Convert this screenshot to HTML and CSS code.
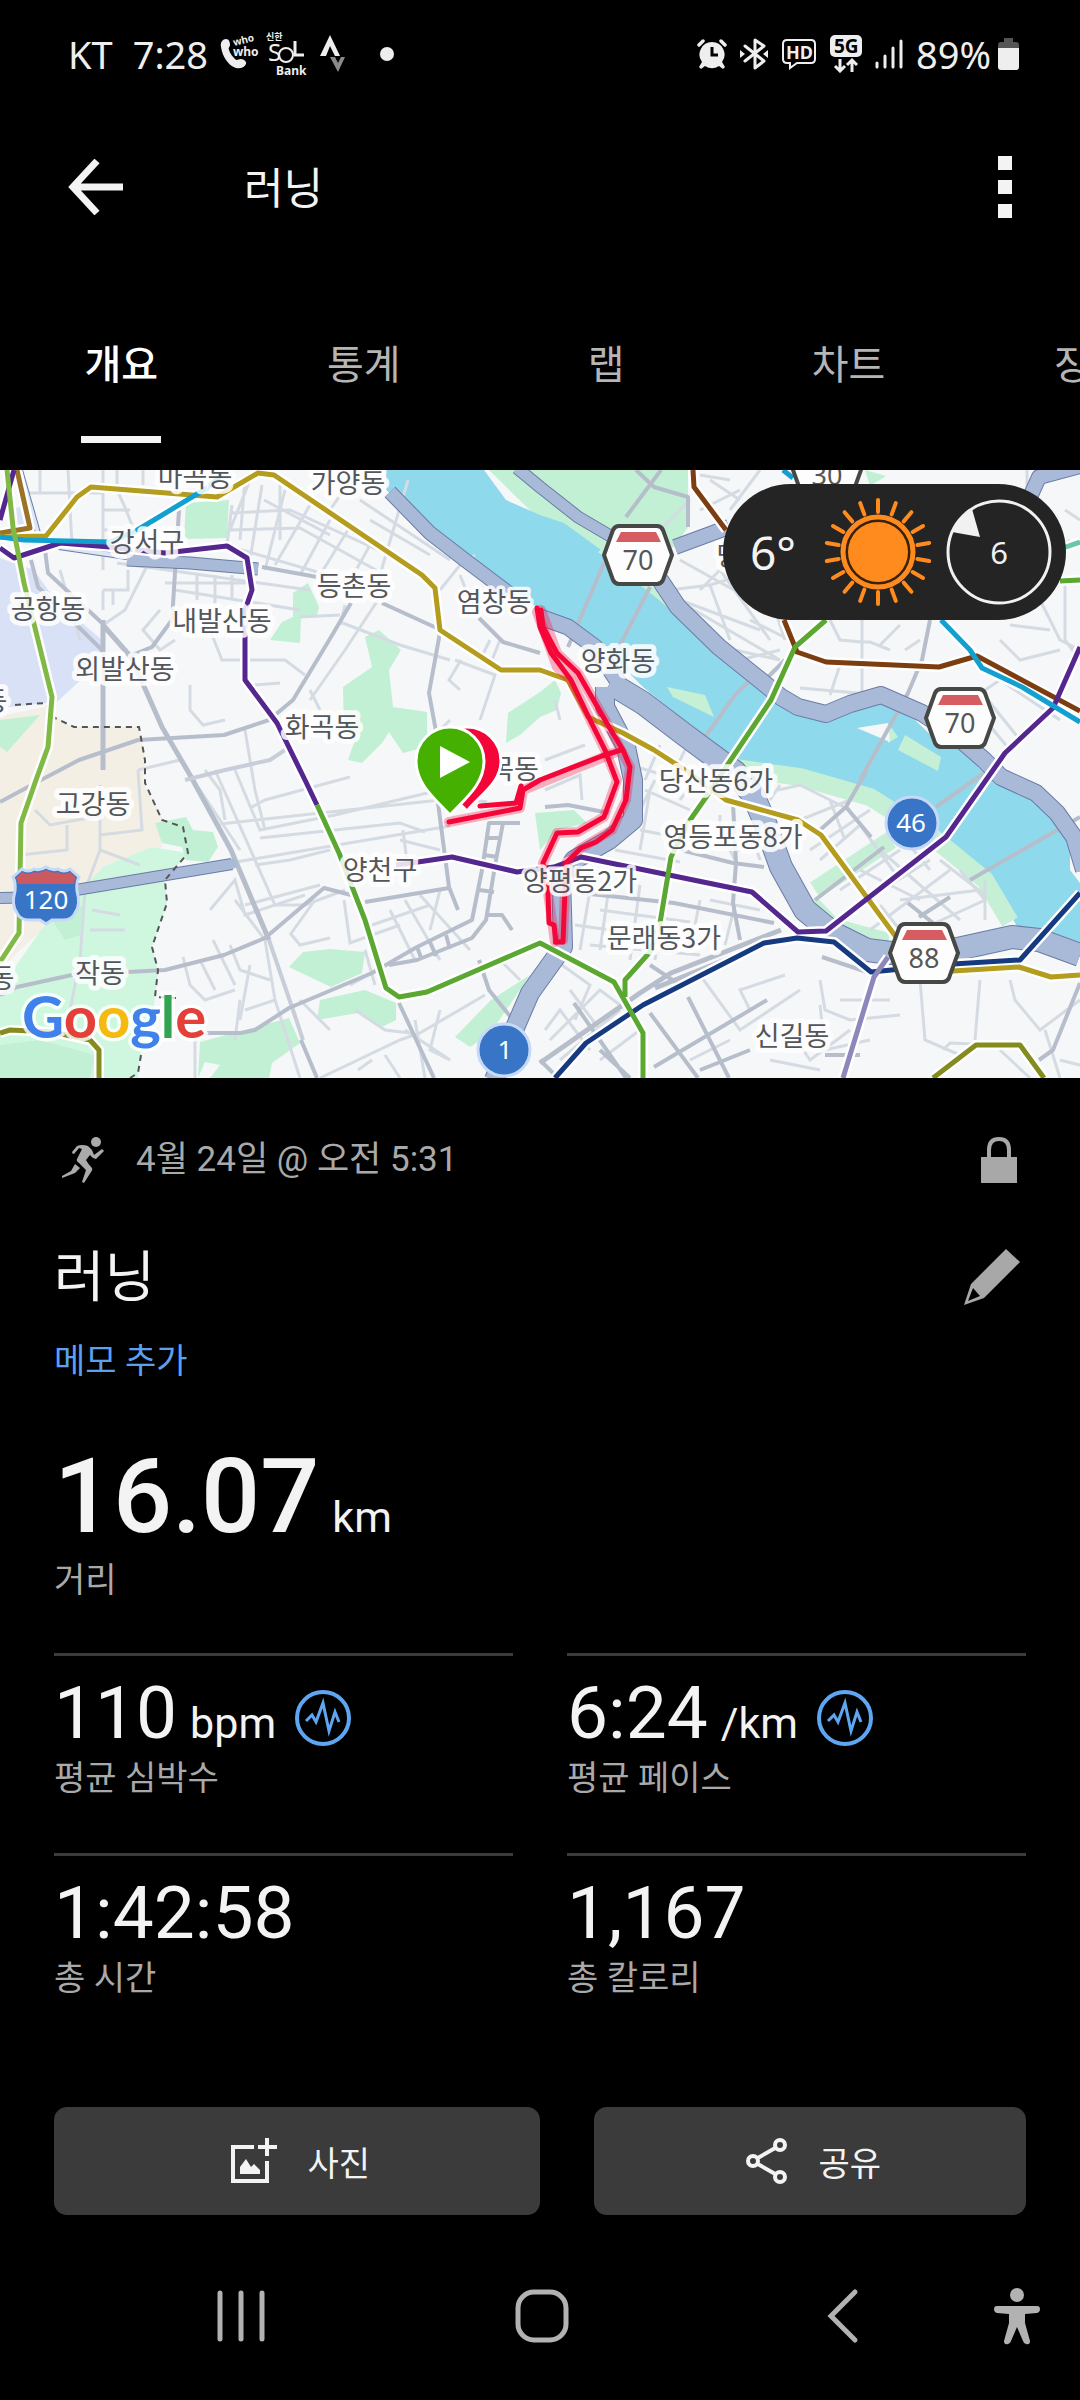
FILE: index.html
```html
<!DOCTYPE html>
<html lang="ko">
<head>
    <meta charset="UTF-8">
    <meta name="viewport" content="width=device-width, initial-scale=1.0">
    <title>러닝</title>
    <link rel="stylesheet" href="styles.css">
</head>
<body>
<div class="status-bar">
    <div class="status-left">
        <span class="carrier">KT</span>
        <span class="time">7:28</span>
        <svg class="whowho" width="40" height="36" viewBox="0 0 40 36">
            <path fill="#eee" d="M1 11C0 6 3 3 6 3c3 0 4 3 4 6 0 2-2 2-1 5 1 4 4 7 6 9 2 2 3 0 6 0 3 0 6 3 5 5-2 4-6 5-10 4C8 30 2 19 1 11z"/>
            <text class="who" x="14" y="10" transform="rotate(-14 14 10)">who</text>
            <text class="who who-big" x="13" y="20">who</text>
        </svg>
        <svg class="sol" width="42" height="46" viewBox="0 0 42 46">
            <text class="sol-ko" x="0" y="9">신한</text>
            <text class="sol-name" x="2" y="30">S</text>
            <circle cx="20" cy="24" r="7" fill="none" stroke="#eee" stroke-width="2"/>
            <path d="M29 10v14h9" fill="none" stroke="#eee" stroke-width="3"/>
            <text class="sol-bank" x="10" y="44">Bank</text>
        </svg>
        <svg class="strava" width="26" height="38" viewBox="0 0 26 38">
            <path fill="#eee" d="M10 0 20 21h-5l-5-10-4 10H0z"/>
            <path fill="#8a8a8a" d="M10 22h5l3 6 3-6h4l-7 15z"/>
        </svg>
        <span class="dot"></span>
    </div>
    <div class="status-right">
        <svg width="30" height="30" viewBox="0 0 30 30">
            <path fill="#eee" d="M15 3a12.5 12.5 0 0 1 10 20l3 5-2 2-4-3a13 13 0 0 1-14 0l-4 3-2-2 3-5A12.5 12.5 0 0 1 15 3z"/>
            <path stroke="#eee" stroke-width="3.5" stroke-linecap="round" d="m2 6 4-4M28 6l-4-4"/>
            <path stroke="#000" stroke-width="3" fill="none" d="M15 8v8h6"/>
        </svg>
        <svg width="28" height="32" viewBox="0 0 28 32">
            <path fill="none" stroke="#eee" stroke-width="3" stroke-linejoin="round" stroke-linecap="round" d="m5 8 19 15-9 7V2l9 6L5 23"/>
            <path fill="#eee" d="m0 12 5 4-5 4zM28 12l-5 4 5 4z"/>
        </svg>
        <svg width="36" height="32" viewBox="0 0 36 32">
            <path fill="none" stroke="#eee" stroke-width="2" d="M6 2h24q4 0 4 4v15q0 4-4 4H16l-7 5v-5H6q-4 0-4-4V6q0-4 4-4z"/>
            <text class="hd" x="5" y="21">HD</text>
        </svg>
        <svg width="32" height="38" viewBox="0 0 32 38">
            <rect x="0" y="0" width="32" height="22" rx="5" fill="#eee"/>
            <text class="five-g" x="4" y="18">5G</text>
            <path fill="none" stroke="#eee" stroke-width="3" d="M10 24v12m-5-5 5 5 5-5M22 37V25m-5 5 5-5 5 5"/>
        </svg>
        <svg width="28" height="32" viewBox="0 0 28 32">
            <path stroke="#eee" stroke-width="3" stroke-linecap="round" d="M2 25v4M10 18v11M18 10v19M26 3v26"/>
        </svg>
        <span class="percent">89%</span>
        <svg class="battery" width="22" height="32" viewBox="0 0 22 32">
            <path fill="#555" d="M6 0h9v4h3q3 0 3 3v4H0V7q0-3 3-3h3z"/>
            <path fill="#eee" d="M0 10h21v19q0 3-3 3H3q-3 0-3-3z"/>
        </svg>
    </div>
</div>

<header class="toolbar">
    <button class="icon-btn" aria-label="뒤로">
        <svg width="56" height="56" viewBox="0 0 56 56">
            <path fill="none" stroke="#f3f3f3" stroke-width="7" d="M29 2 5 28l24 26M5 28h50"/>
        </svg>
    </button>
    <h1>러닝</h1>
    <button class="icon-btn menu-btn" aria-label="메뉴">
        <svg width="14" height="62" viewBox="0 0 14 62">
            <path fill="#f3f3f3" d="M0 0h14v14H0zM0 24h14v14H0zM0 48h14v14H0z"/>
        </svg>
    </button>
</header>

<nav class="tabs">
    <div class="tab"><a class="active" href="#">개요</a></div>
    <div class="tab"><a href="#">통계</a></div>
    <div class="tab"><a href="#">랩</a></div>
    <div class="tab"><a href="#">차트</a></div>
    <div class="tab"><a href="#">장비</a></div>
</nav>

<section class="map">
    <svg class="map-canvas" viewBox="0 470 1080 608">
        <rect x="0" y="470" width="1080" height="608" fill="#f6f7f8"/>

        <!-- airport, city and park areas -->
        <path fill="#d9e1f6" d="M0 558 34 570 55 600 102 640V660L57 702 0 708zM12 510 24 505 28 530 14 530z"/>
        <path fill="#f4efe4" d="M0 716 45 707 55 715 72 727H139L145 760 143 783 155 803 164 822 162 847 138 857 83 885 45 927 20 950 0 970z"/>
        <path fill="#cff7df" d="M0 970 15 967 41 930 69 903 103 867 151 847 188 853 165 880 167 903 152 947 158 970 155 997 150 1030 140 1055 138 1078H0z"/>
        <g fill="#c1f0d4">
            <path d="M0 720 40 715 7 752 0 747z"/>
            <path d="M155 823 186 817 193 830 213 832 218 847 208 862 186 860 182 847 162 843z"/>
            <path d="M52 920 83 905 80 935 65 940z"/>
            <path d="M0 1045 40 1040 95 1055 90 1078H0z"/>
            <path d="M186 503 229 500 227 538 184 539z"/>
            <path d="M308 583 319 607 317 615 301 618 300 643 270 640 282 622 293 617V593z"/>
            <path d="M365 637 379 630 401 650 389 670 393 707 427 712V747L403 753 389 732 382 743 362 763 348 760 355 740 344 730 343 687 372 667z"/>
            <path d="M506 743 508 713 540 692 555 680 561 693 557 710 540 717 520 735z"/>
            <path d="M289 967 303 952 330 949 365 952 362 973 331 987z"/>
            <path d="M320 1000 365 990 396 1003V1020L382 1027 358 1013 317 1020z"/>
            <path d="M200 1042 289 1018 300 1043 272 1063 269 1078H210L220 1065 205 1062 198 1078z"/>
            <path d="M455 1037 491 1000 530 975 489 1035 470 1047z"/>
            <path d="M535 813 574 810 587 823 557 830 540 850z"/>
            <path d="M489 470H688V527L674 547 600 560 540 520z"/>
            <path d="M865 470 886 476 870 486z"/>
        </g>

        <!-- river -->
        <path fill="#8fd9ed" d="M386 470H484L506 500 540 515 564 523 597 547 612 557 660 593 712 637 760 687 781 703 826 717 850 713 881 703 915 720 936 740 960 743 984 767 1001 777 1022 795 1050 810 1070 843V870L1080 883V957L1046 937 1019 930 998 893 970 870 936 833 884 803 860 790 826 777 778 770 740 760 705 737 643 687 609 653 592 640 561 623 540 610 510 587 386 490z"/>
        <path fill="none" stroke="#c5f0d5" stroke-width="6" d="M600 550 660 597 712 641 750 680M625 685 685 738 735 772"/>
        <path fill="none" stroke="#c5f0d5" stroke-width="18" d="M735 768 800 777 870 797 930 835 985 880 1010 922M815 890 891 840M810 903 833 927 888 942"/>
        <path fill="#c5f0d5" d="M667 687 705 695 714 717 673 697zM888 723 898 737 888 743zM905 735 941 757 938 771 898 750z"/>
        <path fill="#f6f7f8" d="M857 728 888 723 890 742z"/>

        <!-- minor streets -->
        <g fill="none" stroke="#d5dbe3" stroke-width="3">
            <path d="M28 493H103M40 470V493M68 470 72 545M103 470V570M103 510H130M117 470V490L124 505 134 530M143 470V485M103 530H124"/>
            <path d="M232 505 227 545M245 480 240 540M262 485 250 560M285 490 265 570M310 505 275 565M330 520 300 575M348 530 320 575M370 545 345 590M230 513 290 510 400 560M230 530 300 528 385 575M225 545 345 580M352 478 330 510M360 500 450 560M370 520 430 555M408 480 380 575M250 480 230 530M280 480V540M264 500 330 535"/>
            <path d="M117 563 310 590M175 590 300 610M197 575V600M215 575V605M232 575V600M165 583H250M103 590H128V570M103 590V610M113 590V605M150 560 125 610 103 625"/>
            <path d="M160 610 143 630 160 650 175 640M210 630 222 660H285L305 675M300 617 340 615M340 622 400 645M345 605 340 625M378 600 345 650 310 700M400 645 450 660M440 590 460 565 475 555M460 575 470 600M455 660 495 675 480 720M461 660 449 680 460 690M190 685V710L203 725 225 720M255 685 280 683M310 690 320 710M245 730 255 790 265 830M60 570 80 640M440 730 450 720M490 640 480 660M500 640 490 665"/>
            <path d="M35 810 50 825 105 815M67 825V850L20 855M100 785V850L85 890 80 960 70 1010M100 850 140 865M138 770 142 830 100 835M138 770 180 760M92 910 120 915M90 930H125"/>
            <path d="M190 775 240 850M215 770 275 905H305L345 890M235 770 260 830 335 815 440 790M220 824 440 800M260 838 400 823 425 832M230 863 450 826M255 865 290 860 330 850M205 770 220 790 225 820M250 808 265 800 350 777M450 797 487 802"/>
            <path d="M245 905 320 885M210 910 235 880 245 915 305 895M235 900 265 940 275 1000 300 1078M290 935 315 900M183 957 190 985 205 1000 235 990M200 960 215 990M213 940 235 985M230 945 240 970 270 980M290 933 300 945 330 938M240 1000 235 1040M245 1010 275 1000M250 965 240 1020"/>
            <path d="M344 900 350 943 400 925M372 925 430 905M390 910 415 960M405 900 440 960M420 895 470 950M440 890 430 930M365 950 375 985M350 985 372 973M320 1078 400 1040 420 1033 485 995M385 1055 400 1078M405 1030 450 1060 430 1050 440 1010M415 1020 425 1078M500 960 520 980M440 850 400 840M403 830 408 870M355 1010 385 1030 410 1033"/>
            <path d="M195 1035V1078M300 1000 330 1030M358 1070 372 1060"/>
            <path d="M550 1040 600 990 640 1020M560 1060 620 1010M570 990 600 1030M555 960 590 985 575 1020M545 1030 560 1010 590 1050M600 1060 640 1030"/>
            <path d="M590 890 580 950M610 880 600 950M640 885 630 960M665 895 655 960M700 900 690 950M575 925 680 940M590 945 700 955M600 910 690 922M735 905 725 945M710 900 760 910M655 780 630 830M645 790 690 810M640 830 740 850M615 850 680 862M650 790 640 850M720 815V830L735 860M750 830 760 860"/>
            <path d="M778 790 800 785 850 810M780 785 770 800M800 820 850 800M810 850 870 810M820 860 860 825 900 880M840 890 900 850M850 910 930 860M870 930 950 870M880 850 960 920M900 900 980 890M920 930 985 900 960 870M985 880V920M940 860 985 895M830 800 845 840M860 870 920 900M880 905 900 930M905 840 930 870"/>
            <path d="M700 975 740 1030 800 990M750 1010 740 990 785 975M820 980 825 1010 850 1020 900 1015M920 980 925 1040 960 1055M980 980 975 1040M1010 980 1015 1000 1040 1030 1080 1000M943 1050 950 1043 1000 1045M820 1005 825 1050 870 1040M770 1060 820 1070M690 1060 730 1040M790 1030 810 1060 850 1030M1000 1050 1030 1078M1060 1060 1080 1065M840 1000 890 1000M1045 1030 1060 1078"/>
            <path d="M830 620 840 640 862 642M862 620V700M862 642H870L890 650M900 625 880 645M905 650 920 640M1040 600 1060 640 1080 650M1065 580V640L1080 660M1010 625 1050 630M980 690 1020 740M1000 680 1060 720M960 690 1010 750M800 688 880 695M840 665 830 695M970 700 1000 680M1000 640 1020 660 1060 650M1045 560 1070 540"/>
            <path d="M670 590 710 585 760 570M680 600 760 630M700 590 730 560M710 585 730 640M680 560 770 610M750 620 790 640M735 650 780 660M740 660 780 650M660 590 780 660M720 570 770 640M775 610 785 640"/>
            <path d="M1065 510 1080 520M1027 470V500M710 480 740 500M730 510 760 470M770 490 790 510M700 510 740 490M650 540 690 500M730 480 700 475"/>
            <path d="M545 760 585 745M560 720 555 700M545 790 580 775 582 800M640 740 625 760M660 745 645 780M685 750 665 790M700 770 680 800M625 740 670 760M630 765 680 780"/>
        </g>

        <!-- main roads -->
        <g fill="none" stroke="#b7becb" stroke-width="4" stroke-linejoin="round">
            <path stroke-width="5" d="M103 620V770M103 625 131 657 162 727 190 775 231 850 269 940"/>
            <path stroke="#c8ced9" d="M269 940 293 1010 303 1040"/>
            <path d="M301 1040 317 1078M45 550 48 573 102 623M31 560 38 587 102 650M179 510 172 620 152 647 127 657"/>
            <path d="M262 567 317 577M382 603 441 630M351 603 331 637 293 700 269 720 224 735 138 740 79 760 41 780 0 802"/>
            <path d="M441 627 429 693 437 737M438 803 449 887 458 910M479 618 503 642 540 653"/>
            <path d="M0 995 17 987 72 975 165 970 224 955 265 938 324 888 351 895M365 902 449 888"/>
            <path d="M205 1033 241 1033 255 1030 289 1008 372 973 417 947 472 920 482 870 489 823H520"/>
            <path d="M389 965 417 960 472 938 486 920 496 860 503 823M479 890 494 892M484 855 498 857M487 838H502M417 947 422 960M430 942 436 956M446 935 450 949"/>
            <path d="M479 960 489 990 513 1020M399 1003 434 1078M488 915 502 915 512 930"/>
            <path d="M545 807 568 805 609 813M581 893 674 903 774 923M733 803 736 863 733 903 740 940M681 850 733 863 764 867"/>
            <path stroke-width="5" d="M781 930 671 973 640 993 540 1063M775 940 655 988"/>
            <path d="M574 1003 626 1078M654 1067 767 1000M688 997 729 1078M650 1013 698 1078M700 1070 750 1050M540 1060 570 1090M650 965 680 985M600 1050 630 1078"/>
            <path d="M822 957 867 972M1080 983 1053 1050 1039 1060M867 770 846 807 871 837M846 807 820 830M815 900 884 847M908 903 933 923M919 917 950 897M825 1055H860"/>
            <path d="M661 470 626 517M604 563 568 647M650 587 619 647M930 620 922 660 908 693 860 780M1080 817 970 880M984 773 936 807M636 470 654 487 688 497V527"/>
            <path d="M750 680 735 695 705 737M765 680 785 660"/>
            <path stroke="#c8ced9" d="M185 780 225 770 270 760 285 750"/>
        </g>

        <!-- expressways: dark edge first, fill over it -->
        <g fill="none" stroke-linejoin="round">
            <g stroke="#6a7ca6">
                <path stroke-width="15" d="M390 492 430 533 465 560 510 594"/>
                <path stroke-width="17" d="M540 617 568 627 595 647 619 683"/>
                <path stroke-width="24" d="M610 683 643 703 685 735 735 772 753 795 764 820 781 867 805 910 833 933 867 950 891 953 953 950 1012 937 1039 940 1080 955"/>
                <path stroke-width="13" d="M517 468 540 487 578 517 612 537 660 580 678 607"/>
                <path stroke-width="18" d="M660 580 678 607 719 647 760 680 781 697 798 707 826 714 850 704 881 695 922 713 953 733 984 760 1001 777 1036 793 1057 813 1074 837 1084 870"/>
                <path stroke-width="16" d="M675 547 729 527M1030 497 1039 477 1080 466"/>
                <path stroke-width="20" d="M605 687V707L626 747 633 780V820L609 840 574 860 561 880 562 910 563 947 530 993 514 1030 494 1080"/>
                <path stroke-width="12" d="M0 898 46 897M70 891 232 864"/>
                <path stroke-width="6" d="M59 547 127 557M20 470 38 533"/>
                <path stroke-width="13" d="M127 560 190 563 258 569"/>
            </g>
            <g stroke="#a9b9d8">
                <path stroke-width="13" d="M390 492 430 533 465 560 510 594"/>
                <path stroke-width="15" d="M540 617 568 627 595 647 619 683"/>
                <path stroke-width="22" d="M610 683 643 703 685 735 735 772 753 795 764 820 781 867 805 910 833 933 867 950 891 953 953 950 1012 937 1039 940 1080 955"/>
                <path stroke-width="11" d="M517 468 540 487 578 517 612 537 660 580 678 607"/>
                <path stroke-width="16" d="M660 580 678 607 719 647 760 680 781 697 798 707 826 714 850 704 881 695 922 713 953 733 984 760 1001 777 1036 793 1057 813 1074 837 1084 870"/>
                <path stroke-width="14" d="M675 547 729 527M1030 497 1039 477 1080 466"/>
                <path stroke-width="18" d="M605 687V707L626 747 633 780V820L609 840 574 860 561 880 562 910 563 947 530 993 514 1030 494 1080"/>
                <path stroke-width="10" stroke-linecap="round" d="M0 898 46 897M70 891 232 864"/>
                <path stroke-width="4" stroke="#dde6f7" d="M59 547 127 557M20 470 38 533"/>
                <path stroke-width="11" d="M127 560 190 563 258 569"/>
            </g>
        </g>
        <path fill="none" stroke="#555" stroke-width="2" stroke-dasharray="6 5" d="M15 705 45 703 55 718 74 727H139L145 760V783L162 820 183 827 188 853 165 880 167 903 152 947 158 970 155 997 177 998M141 1055 138 1073 130 1078"/>

        <!-- subway lines -->
        <g class="subway">
            <g stroke="#fff" stroke-width="10">
                <path d="M0 537 46 536 77 497 91 487 217 497 258 473 274 475 422 575 435 588 440 630 501 670H540L568 680 588 717 623 733 654 750 685 770 726 800 798 820 821 835 896 937 930 970 953 971 1019 967 1051 977 1080 975"/>
                <path d="M14 470 0 520M0 548 14 558 60 543 110 547 165 553 227 546 247 558 252 590 245 610V680L277 723 305 780 317 805 339 853 365 920 386 988 399 997 427 992 540 943 614 982 643 1033V1078"/>
                <path d="M396 865 418 862 452 857 517 872 554 867 581 857 752 892 798 932 826 931 946 837 1005 753 1053 708 1080 647"/>
                <path d="M826 620 795 647 771 700 726 767 709 793 688 823 671 857 660 923 650 952 625 980V997M1060 581 1080 580M1060 549 1080 542"/>
                <path d="M7 470 13 527 24 583 52 697 48 747 36 780 21 823 19 933 0 962M17 470 30 528 0 533"/>
                <path d="M693 470 694 487 726 530M784 620 797 652 826 662 939 667 977 656 1080 711M941 620 970 650 982 668 1022 687 1080 722"/>
                <path d="M555 1078 586 1043 643 1005 764 943 797 938 834 942 871 972 953 964 1020 960 1080 893M888 957 874 977 843 1078"/>
                <path d="M933 1078 976 1045H1020L1044 1078M0 1033 10 1030 52 1032 90 1040 99 1050V1078M134 532 207 488"/>
            </g>
            <g stroke-width="5">
                <path stroke="#7c3d10" d="M693 470 694 487 726 530M784 620 797 652 826 662 939 667 977 656 1080 711"/>
                <path stroke="#9c7326" d="M17 470 30 528 0 533"/>
                <path stroke="#b39c1e" d="M0 537 46 536 77 497 91 487 217 497 258 473 274 475 422 575 435 588 440 630 501 670H540L568 680 588 717 623 733 654 750 685 770 726 800 798 820 821 835 896 937 930 970 953 971 1019 967 1051 977 1080 975"/>
                <path stroke="#54278f" d="M14 470 0 520M0 548 14 558 60 543 110 547 165 553 227 546 247 558 252 590 245 610V680L277 723 305 780 317 805"/>
                <path stroke="#54278f" d="M396 865 418 862 452 857 517 872 554 867 581 857 752 892 798 932 826 931 946 837 1005 753 1053 708 1080 647"/>
                <path stroke="#12a0d0" d="M0 537 24 540 110 542 134 532 207 488 222 475M941 620 970 650 982 668 1022 687 1080 722M783 470 793 478"/>
                <path stroke="#80ba45" d="M7 470 13 527 24 583 52 697 48 747 36 780 21 823 19 933 0 962"/>
                <path stroke="#163a80" d="M555 1078 586 1043 643 1005 764 943 797 938 834 942 871 972 953 964 1020 960 1080 893"/>
                <path stroke="#5aa832" d="M317 805 339 853 365 920 386 988 399 997 427 992 540 943 614 982 643 1033V1078M826 620 795 647 771 700 726 767 709 793 688 823 671 857 660 923 650 952 625 980V997M1060 581 1080 580"/>
                <path stroke="#6cc6a5" d="M1060 549 1080 542"/>
                <path stroke="#8d88bb" d="M888 957 874 977 843 1078"/>
                <path stroke="#848c20" d="M933 1078 976 1045H1020L1044 1078M0 1033 10 1030 52 1032 90 1040 99 1050V1078"/>
            </g>
        </g>

        <g class="place">
            <text x="195" y="487">마곡동</text>
            <text x="348" y="493">가양동</text>
            <text x="147" y="552">강서구</text>
            <text x="48" y="619">공항동</text>
            <text x="354" y="596">등촌동</text>
            <text x="222" y="631">내발산동</text>
            <text x="125" y="679">외발산동</text>
            <text x="322" y="737">화곡동</text>
            <text x="-5" y="711">동</text>
            <text x="514" y="779">목동</text>
            <text x="93" y="814">고강동</text>
            <text x="100" y="983">작동</text>
            <text x="2" y="988">동</text>
            <text x="380" y="880">양천구</text>
            <text x="664" y="948">문래동3가</text>
            <text x="716" y="791">당산동6가</text>
            <text x="733" y="847">영등포동8가</text>
            <text x="792" y="1046">신길동</text>
            <text x="618" y="671">양화동</text>
            <text x="729" y="566">망</text>
        </g>

        <!-- recorded route -->
        <g fill="none" stroke-linejoin="round" stroke-linecap="round">
            <g stroke="#f50638" stroke-opacity=".3" stroke-width="10">
                <path d="M537 612 557 667 571 680 605 750 617 780 604 817 578 832 557 833 543 863 548 893 555 942"/>
                <path d="M541 610 557 653 578 673 609 727 630 767 626 800 612 830 581 848 566 863 563 940M621 750 523 790 520 808 449 822"/>
            </g>
            <g stroke="#f50638" stroke-width="5">
                <path d="M537 608 540 627 551 653 571 680 590 720 605 750 617 782 604 817 578 832 557 833 543 863 548 893 549 923 554 925 556 942"/>
                <path d="M541 610 543 627 557 653 578 673 609 727 623 750 630 767 626 800 612 830 596 842 581 848 566 863 563 942 556 942"/>
                <path d="M621 750 602 756 540 780 523 790 520 808 449 822M521 786 516 803 480 806"/>
            </g>
        </g>
        <g class="place end-label">
            <text x="580" y="891">양평동2가</text>
            <text x="494" y="612">염창동</text>
        </g>

        <!-- end and start pins -->
        <path fill="#f50638" stroke="#fff" stroke-width="3" d="M467 811C450 794 433 781 433 761a34 34 0 0 1 68 0c0 22-20 33-34 50z"/>
        <path fill="#46b000" stroke="#fff" stroke-width="3" d="M450 815C434 798 416 784 416 761a34 34 0 0 1 68 0c0 23-18 37-34 54z"/>
        <path fill="#fff" d="M440 746 470 762 440 778z"/>

        <!-- road shields -->
        <g class="shield">
            <g transform="translate(638 555)">
                <path d="M-19-29H19q4 0 6 4L34 0 25 25q-2 4-6 4H-19q-4 0-6-4L-34 0-25-25q2-4 6-4z"/>
                <path class="band" d="M-17-23H18L23-13H-22z"/>
                <text y="15">70</text>
            </g>
            <g transform="translate(960 718)">
                <path d="M-19-29H19q4 0 6 4L34 0 25 25q-2 4-6 4H-19q-4 0-6-4L-34 0-25-25q2-4 6-4z"/>
                <path class="band" d="M-17-23H18L23-13H-22z"/>
                <text y="15">70</text>
            </g>
            <g transform="translate(924 953)">
                <path d="M-19-29H19q4 0 6 4L34 0 25 25q-2 4-6 4H-19q-4 0-6-4L-34 0-25-25q2-4 6-4z"/>
                <path class="band" d="M-17-23H18L23-13H-22z"/>
                <text y="15">88</text>
            </g>
            <g transform="translate(827 470)">
                <path d="M-19-29H19q4 0 6 4L34 0 25 25q-2 4-6 4H-19q-4 0-6-4L-34 0-25-25q2-4 6-4z"/>
                <text y="15">30</text>
            </g>
        </g>
        <g class="badge">
            <circle cx="912" cy="823" r="26"/>
            <text x="911" y="832">46</text>
            <circle cx="504" cy="1050" r="26"/>
            <text x="505" y="1059">1</text>
            <path d="M22 869q6 4 12 0 6 2 12-2 6 4 12 2 6 4 12 0l9 8q-3 6-2 14 4 14-2 22-3 7-12 7H52l-6 4-6-4H29q-9 0-12-7-6-8-2-22 1-8-2-14z"/>
            <path class="red" d="M22 872q6 4 12 0 6 2 12-2 6 4 12 2 6 4 12 0l6 6q-2 3-2 6H18q0-3-2-6z"/>
            <text x="46" y="909">120</text>
        </g>
        <text class="google" x="22" y="1038"><tspan fill="#4081ec">G</tspan><tspan fill="#e3403a">o</tspan><tspan fill="#f5b90f">o</tspan><tspan fill="#4081ec">g</tspan><tspan fill="#32a350">l</tspan><tspan fill="#e3403a">e</tspan></text>
    </svg>

    <div class="weather">
        <span class="temp">6°</span>
        <svg width="108" height="112" viewBox="-54 -56 108 112">
            <g stroke="#ff8a1e" stroke-width="4" stroke-linecap="round">
                <path id="ray" d="M0-40V-52M0 40V52"/>
                <use href="#ray" transform="rotate(20)"/>
                <use href="#ray" transform="rotate(40)"/>
                <use href="#ray" transform="rotate(60)"/>
                <use href="#ray" transform="rotate(80)"/>
                <use href="#ray" transform="rotate(100)"/>
                <use href="#ray" transform="rotate(120)"/>
                <use href="#ray" transform="rotate(140)"/>
                <use href="#ray" transform="rotate(160)"/>
            </g>
            <circle r="35" fill="#3a2109" stroke="#ff8a1e" stroke-width="5"/>
            <circle r="30" fill="#ff8a1e"/>
        </svg>
        <svg width="106" height="106" viewBox="-53 -53 106 106">
            <circle r="51" fill="none" stroke="#f1f1f1" stroke-width="3"/>
            <path fill="#f1f1f1" d="M-27-43-19-15-47-20q7-14 20-23z"/>
            <text class="wind" y="12">6</text>
        </svg>
    </div>
</section>

<main class="details">
    <div class="date-row">
        <svg width="44" height="46" viewBox="0 0 44 46">
            <g fill="#aaa">
                <circle cx="34" cy="5" r="5"/>
                <path d="m10 15 5-6q5-2 11 0l4 4 2 5 8-6 2 2-8 8-3-1-3-3-4 5q2 4 6 8 1 2-1 4l-7 11-2-1 4-12-7-7q-3-2-2-4l5-10-3-1-5 6q-2 0-2-2z"/>
                <path d="m13 27 5 4-5 5L0 41v-2l9-5z"/>
            </g>
        </svg>
        <p class="date">4월 24일 @ 오전 5:31</p>
        <svg class="lock" width="36" height="46" viewBox="0 0 36 46">
            <path fill="none" stroke="#a8a8a8" stroke-width="4" d="M8 22V13q0-11 10-11t10 11v9"/>
            <rect y="20" width="36" height="26" fill="#a8a8a8"/>
        </svg>
    </div>
    <div class="title-row">
        <h2>러닝</h2>
        <button class="icon-btn" aria-label="편집">
            <svg width="58" height="58" viewBox="0 0 58 58">
                <path fill="#a8a8a8" d="M43 1 57 14 21 50 1 57 8 36z"/>
                <path fill="#000" d="M10 40 17 48 5 53z"/>
            </svg>
        </button>
    </div>
    <a class="memo" href="#">메모 추가</a>

    <div class="distance">
        <div class="value-big">16.07<span class="unit">km</span></div>
        <p class="label">거리</p>
    </div>

    <div class="stats">
        <div class="stat">
            <div class="value">
                <span>110<span class="unit">bpm</span></span>
                <button class="icon-btn chart-btn" aria-label="심박수 차트">
                    <svg width="58" height="58" viewBox="0 0 58 58">
                        <circle cx="29" cy="29" r="26" fill="none" stroke="#5ea6f2" stroke-width="4"/>
                        <path fill="none" stroke="#5ea6f2" stroke-width="3" d="m12 32 6-6 4 7 7-19 6 28 6-19 4 10"/>
                    </svg>
                </button>
            </div>
            <p class="label">평균 심박수</p>
        </div>
        <div class="stat">
            <div class="value">
                <span>6:24<span class="unit">/km</span></span>
                <button class="icon-btn chart-btn" aria-label="페이스 차트">
                    <svg width="58" height="58" viewBox="0 0 58 58">
                        <circle cx="29" cy="29" r="26" fill="none" stroke="#5ea6f2" stroke-width="4"/>
                        <path fill="none" stroke="#5ea6f2" stroke-width="3" d="m12 32 6-6 4 7 7-19 6 28 6-19 4 10"/>
                    </svg>
                </button>
            </div>
            <p class="label">평균 페이스</p>
        </div>
        <div class="stat">
            <div class="value">1:42:58</div>
            <p class="label">총 시간</p>
        </div>
        <div class="stat">
            <div class="value">1,167</div>
            <p class="label">총 칼로리</p>
        </div>
    </div>

    <div class="actions">
        <button class="action photo">
            <svg width="46" height="46" viewBox="0 0 46 46">
                <path fill="none" stroke="#f3f3f3" stroke-width="4" d="M23 9H2v34h34V23"/>
                <path fill="none" stroke="#f3f3f3" stroke-width="4" d="M36 0v18M27 9h19"/>
                <path fill="#f3f3f3" d="M9 36V29l6-8 5 8 3-3 6 6v4z"/>
            </svg>
            사진
        </button>
        <button class="action">
            <svg width="42" height="46" viewBox="0 0 42 46">
                <path fill="none" stroke="#f3f3f3" stroke-width="4" d="M10 21 31 9M10 25 31 37"/>
                <g fill="#3b3b3b" stroke="#f3f3f3" stroke-width="4">
                    <circle cx="7" cy="23" r="5"/>
                    <circle cx="34" cy="7" r="5"/>
                    <circle cx="34" cy="39" r="5"/>
                </g>
            </svg>
            공유
        </button>
    </div>
</main>

<footer class="nav-bar">
    <button class="icon-btn" aria-label="최근 앱">
        <svg width="50" height="54" viewBox="0 0 50 54">
            <path stroke="#b2b2b2" stroke-width="5" stroke-linecap="round" d="M4 4v46M25 4v46M46 4v46"/>
        </svg>
    </button>
    <button class="icon-btn" aria-label="홈">
        <svg width="54" height="54" viewBox="0 0 54 54">
            <rect x="3" y="3" width="48" height="48" rx="16" fill="none" stroke="#b2b2b2" stroke-width="5"/>
        </svg>
    </button>
    <button class="icon-btn" aria-label="뒤로 가기">
        <svg width="32" height="56" viewBox="0 0 32 56">
            <path fill="none" stroke="#b2b2b2" stroke-width="5" stroke-linecap="round" d="M28 4 4 28l24 24"/>
        </svg>
    </button>
    <button class="icon-btn access" aria-label="접근성">
        <svg width="46" height="58" viewBox="0 0 46 58">
            <circle cx="23" cy="8" r="7" fill="#b2b2b2"/>
            <path fill="#b2b2b2" d="M3 19H43q3 0 3 3t-3 4L31 27v9l5 18q0 4-4 3-2 0-3-3L23 40l-6 14q-1 3-3 3-4 1-4-3l5-18v-9L3 26Q0 25 0 22t3-3z"/>
        </svg>
    </button>
</footer>
</body>
</html>
```

FILE: styles.css
```css
/* CSS styles */
body {
    font-family: Roboto, "Noto Sans CJK KR", sans-serif;
    background-color: #000;
    color: #f3f3f3;
    margin: 0;
}
svg {
    display: block;
    flex-shrink: 0;
}
h1, h2, p {
    margin: 0;
    font-weight: normal;
}
.icon-btn {
    display: flex;
    background: none;
    border: none;
    padding: 0;
    cursor: pointer;
}

/* status bar */
.status-bar {
    display: flex;
    justify-content: space-between;
    align-items: center;
    padding: 27px 60px 27px 68px;
    font-family: "Noto Sans", sans-serif;
    font-size: 38px;
    line-height: 54px;
    color: #eee;
}
.status-left, .status-right {
    display: flex;
    align-items: center;
}
.time {
    margin-left: 20px;
}
.whowho {
    margin-left: 12px;
    overflow: visible;
}
.sol {
    margin-left: 6px;
    overflow: visible;
}
.strava {
    margin-left: 12px;
}
.dot {
    width: 14px;
    height: 14px;
    border-radius: 50%;
    background-color: #eee;
    margin-left: 34px;
}
.status-right {
    gap: 13px;
}
.battery {
    margin-left: -6px;
}
.who, .sol-ko, .sol-name, .sol-bank, .hd {
    fill: #eee;
    font-weight: bold;
    font-family: "Noto Sans", "Noto Sans CJK KR", sans-serif;
    font-size: 10px;
}
.who-big {
    font-size: 12px;
}
.sol-ko {
    font-size: 9px;
}
.sol-name {
    font-weight: normal;
    font-size: 24px;
}
.sol-bank {
    font-size: 12px;
}
.hd {
    font-size: 18px;
}
.five-g {
    fill: #000;
    font-size: 19px;
    font-weight: bold;
}

/* toolbar and tabs */
.toolbar {
    display: flex;
    align-items: center;
    padding: 47px 68px;
}
.toolbar h1 {
    font-size: 43px;
    line-height: 60px;
    padding-top: 4px;
    margin-left: 120px;
}
.menu-btn {
    margin-left: auto;
}
.tabs {
    display: grid;
    grid-template-columns: repeat(5, 22.45%);
    overflow: hidden;
    padding-bottom: 27px;
}
.tab {
    display: flex;
    justify-content: center;
}
.tab a {
    font-size: 40px;
    line-height: 60px;
    padding: 70px 3px 40px;
    border-bottom: 7px solid transparent;
    color: #b5b5b5;
    text-decoration: none;
}
.tab .active {
    color: #fff;
    font-weight: 500;
    border-color: #f3f3f3;
}

/* map */
.map {
    position: relative;
}
.map-canvas {
    width: 100%;
    height: auto;
}
.subway {
    fill: none;
    stroke-linejoin: round;
}
.place {
    font-family: "Noto Sans CJK KR", sans-serif;
    font-size: 27px;
    fill: #53565b;
    stroke: #fff;
    stroke-width: 10px;
    stroke-opacity: .85;
    stroke-linejoin: round;
    paint-order: stroke;
    text-anchor: middle;
}
.end-label {
    stroke-width: 7px;
}
.shield {
    fill: #fdfdfd;
    stroke: #464846;
    stroke-width: 4px;
    font-family: "Noto Sans", sans-serif;
    font-size: 27px;
}
.shield .band {
    fill: #d65c62;
    stroke: none;
}
.shield text {
    fill: #565656;
    stroke: none;
    text-anchor: middle;
}
.badge {
    fill: #3975c6;
    stroke: #c6daf8;
    stroke-width: 3px;
    font-family: "Noto Sans", sans-serif;
    font-size: 26px;
}
.badge .red {
    fill: #cd5960;
    stroke: none;
}
.badge text {
    fill: #fff;
    stroke: none;
    text-anchor: middle;
}
.google {
    font-family: Lato, sans-serif;
    font-size: 58px;
    font-weight: bold;
    stroke: #fff;
    stroke-width: 7px;
    stroke-opacity: .8;
    paint-order: stroke;
}
.weather {
    position: absolute;
    top: 14px;
    right: 14px;
    display: flex;
    align-items: center;
    gap: 14px;
    box-sizing: border-box;
    height: 136px;
    padding: 0 14px 0 27px;
    border-radius: 68px;
    background-color: #242424;
    font-family: "Noto Sans", sans-serif;
}
.temp {
    font-size: 46px;
    margin-right: 14px;
}
.wind {
    fill: #f1f1f1;
    font-size: 31px;
    text-anchor: middle;
}

/* activity details */
.details {
    padding: 55px 54px 0;
}
.date-row {
    display: flex;
    align-items: center;
    height: 54px;
    padding: 0 9px 0 8px;
}
.date {
    color: #a9a9a9;
    font-size: 35px;
    line-height: 54px;
    margin-left: 30px;
}
.lock {
    margin-left: auto;
}
.title-row {
    display: flex;
    align-items: center;
    justify-content: space-between;
    margin-top: 53px;
    padding-right: 5px;
}
.title-row h2 {
    font-size: 55px;
    line-height: 74px;
}
.memo {
    display: block;
    margin-top: 22px;
    color: #5ba1f0;
    font-size: 34px;
    line-height: 50px;
    text-decoration: none;
}
.distance {
    margin-top: 51px;
}
.value-big {
    font-size: 104px;
    font-weight: 500;
    line-height: 120px;
}
.unit {
    font-size: 43px;
    font-weight: normal;
    line-height: 44px;
    margin-left: 13px;
}
.label {
    color: #a9a9a9;
    font-size: 34px;
    line-height: 46px;
}
.stats {
    display: grid;
    grid-template-columns: 1fr 1fr;
    gap: 52px 54px;
    margin-top: 50px;
}
.stat {
    border-top: 3px solid #3c3c3c;
    padding-top: 15px;
}
.value {
    display: flex;
    align-items: center;
    gap: 18px;
    font-size: 73px;
    line-height: 84px;
}
.chart-btn {
    padding-top: 10px;
}
.actions {
    display: flex;
    gap: 54px;
    margin-top: 106px;
}
.action {
    display: flex;
    flex: 8 1 0;
    align-items: center;
    justify-content: center;
    gap: 30px;
    height: 108px;
    padding: 0 0 0 8px;
    border: none;
    border-radius: 13px;
    background-color: #3b3b3b;
    color: #f3f3f3;
    font-family: inherit;
    font-size: 34px;
    cursor: pointer;
}
.photo {
    flex-grow: 9;
}

/* system navigation */
.nav-bar {
    display: grid;
    grid-template-columns: 1fr 1fr 1fr 86px;
    align-items: center;
    justify-items: center;
    padding: 72px 0 54px 90px;
}
.access {
    justify-self: start;
}
```
